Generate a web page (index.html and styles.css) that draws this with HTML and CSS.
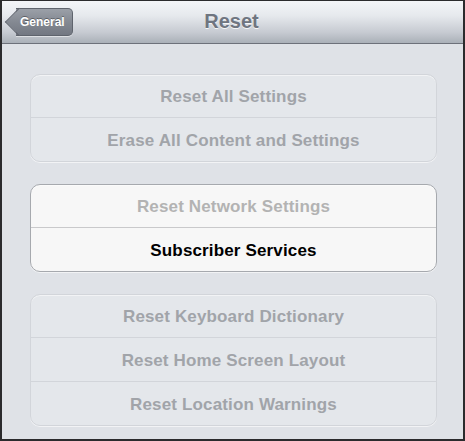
FILE: index.html
```html
<!DOCTYPE html>
<html>
<head>
    <meta charset="utf-8">
    <link rel="stylesheet" href="styles.css">
</head>
<body>
    <div class="screen">
        <div class="navbar">
            <div class="nav-side">
                <button class="back-btn">General</button>
            </div>
            <h1 class="nav-title">Reset</h1>
            <div class="nav-side"></div>
        </div>

        <div class="content">
            <div class="group">
                <div class="row disabled">Reset All Settings</div>
                <div class="row disabled">Erase All Content and Settings</div>
            </div>

            <div class="group active">
                <div class="row disabled">Reset Network Settings</div>
                <div class="row">Subscriber Services</div>
            </div>

            <div class="group">
                <div class="row disabled">Reset Keyboard Dictionary</div>
                <div class="row disabled">Reset Home Screen Layout</div>
                <div class="row disabled">Reset Location Warnings</div>
            </div>
        </div>
    </div>
</body>
</html>
```

FILE: styles.css
```css
* {
    box-sizing: border-box;
}

html, body {
    margin: 0;
    padding: 0;
}

body {
    width: 465px;
    height: 441px;
    background: #2b2b2d;
    font-family: 'Liberation Sans', Arial, sans-serif;
    overflow: hidden;
}

.screen {
    margin: 1px 2px 0 2px;
    height: 438px;
    background: #dfe2e7;
    display: flex;
    flex-direction: column;
}

/* top bar */
.navbar {
    height: 43px;
    flex-shrink: 0;
    display: flex;
    align-items: center;
    background: linear-gradient(180deg, #f3f5f8 0%, #e6e9ed 35%, #c6cad1 75%, #aab0b8 100%);
    border-bottom: 1px solid #6d717a;
}

.nav-side {
    width: 100px;
    display: flex;
    align-items: center;
}

.nav-title {
    flex: 1;
    margin: 0 0 2px 0;
    text-align: center;
    font-size: 20px;
    font-weight: bold;
    color: #6f7580;
    text-shadow: 0 1px 0 rgba(255, 255, 255, 0.8);
    padding-right: 2px;
}

.back-btn {
    position: relative;
    z-index: 1;
    margin-left: 14px;
    height: 28px;
    padding: 0 7px 0 4px;
    border: 1px solid #5f646d;
    border-left: none;
    border-radius: 0 5px 5px 0;
    background: linear-gradient(180deg, #9ba0a8 0%, #848992 50%, #737882 100%);
    color: white;
    font-family: 'Liberation Sans', Arial, sans-serif;
    font-size: 12px;
    font-weight: bold;
    text-shadow: 0 -1px 0 rgba(0, 0, 0, 0.35);
    box-shadow: 0 1px 0 rgba(255, 255, 255, 0.5);
}

.back-btn::before {
    content: '';
    position: absolute;
    left: -7px;
    top: 3px;
    width: 19px;
    height: 19px;
    transform: rotate(45deg);
    border-left: 1px solid #5f646d;
    border-bottom: 1px solid #5f646d;
    background: linear-gradient(135deg, #9ba0a8 0%, #848992 50%, #737882 100%);
    z-index: -1;
}

/* grouped table */
.content {
    padding: 30px 26px 0 28px;
    display: flex;
    flex-direction: column;
    gap: 22px;
}

.group {
    border: 1px solid #d2d5da;
    border-radius: 10px;
    background: #e4e7eb;
    box-shadow: inset 0 1px 0 rgba(255, 255, 255, 0.5), 0 1px 0 rgba(255, 255, 255, 0.6);
    overflow: hidden;
}

.group.active {
    border-color: #a6a9ae;
    background: #f7f7f7;
}

.row {
    height: 42px;
    padding-top: 2px;
    display: flex;
    align-items: center;
    justify-content: center;
    font-size: 17px;
    font-weight: bold;
    letter-spacing: 0.15px;
    color: #000;
}

.row + .row {
    border-top: 1px solid #d2d5da;
    height: 44px;
    padding-top: 3px;
    padding-bottom: 0;
}

.group.active .row + .row {
    border-top-color: #c9c9cb;
}

.row.disabled {
    color: #a1a4a9;
}

.group.active .row.disabled {
    color: #b3b3b3;
}
```
